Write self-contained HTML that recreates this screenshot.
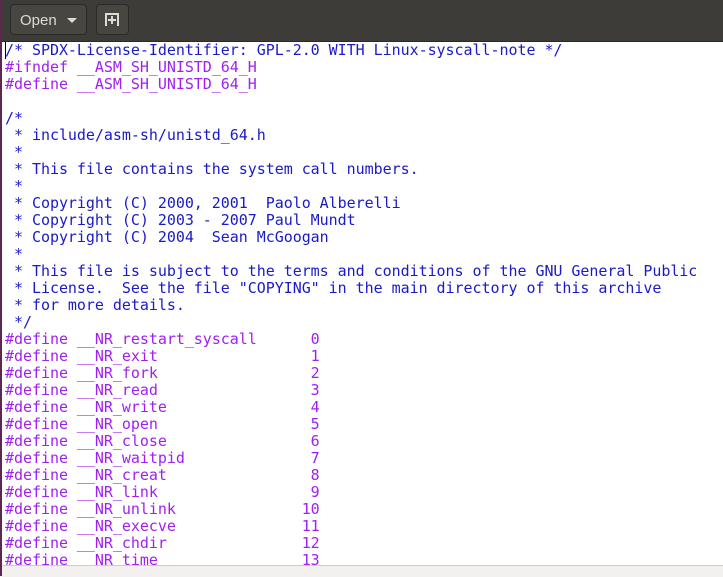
<!DOCTYPE html>
<html><head><style>
body{margin:0;width:723px;height:576px;overflow:hidden;background:#fff;position:relative;font-family:"DejaVu Sans Mono",monospace}
#hdr{position:absolute;left:0;top:0;width:723px;height:41px;background:#3d3c38;border-bottom:1px solid #2a2a28}
.btn{position:absolute;top:4px;height:31px;border:1px solid #2b2a27;border-radius:4px;background:#474641;color:#dfdbd2;font:15px "Liberation Sans",sans-serif;box-sizing:border-box}
#strip{position:absolute;left:0;top:0;width:2px;height:576px;background:#5e2750}
pre{position:absolute;left:5px;top:42px;margin:0;font:15px/17px "DejaVu Sans Mono",monospace;letter-spacing:-0.04px;color:#a020f0;white-space:pre}
.c{color:#1a1ac8}
#cur{position:absolute;left:5px;top:42px;width:1px;height:17px;background:#000}
#bot{position:absolute;left:0;top:565px;width:723px;height:11px;background:#f2f1f0;border-top:1px solid #cfcdca}
</style></head><body>
<div id="hdr">
<div class="btn" style="left:10px;width:77px"><span style="position:absolute;left:9px;top:7px">Open</span><span style="position:absolute;left:56px;top:13px;width:0;height:0;border-left:5px solid transparent;border-right:5px solid transparent;border-top:5px solid #dfdbd2"></span></div>
<div class="btn" style="left:96px;width:33px"><svg width="33" height="31" style="position:absolute;left:-1px;top:-1px"><path d="M10 22V10h12v12" fill="none" stroke="#dfdbd2" stroke-width="2"/><path d="M16 12v8M12 16h8" stroke="#dfdbd2" stroke-width="2"/></svg></div>
</div>
<pre><span class="c">/* SPDX-License-Identifier: GPL-2.0 WITH Linux-syscall-note */</span>
#ifndef __ASM_SH_UNISTD_64_H
#define __ASM_SH_UNISTD_64_H

<span class="c">/*
 * include/asm-sh/unistd_64.h
 *
 * This file contains the system call numbers.
 *
 * Copyright (C) 2000, 2001  Paolo Alberelli
 * Copyright (C) 2003 - 2007 Paul Mundt
 * Copyright (C) 2004  Sean McGoogan
 *
 * This file is subject to the terms and conditions of the GNU General Public
 * License.  See the file "COPYING" in the main directory of this archive
 * for more details.
 */</span>
#define __NR_restart_syscall      0
#define __NR_exit                 1
#define __NR_fork                 2
#define __NR_read                 3
#define __NR_write                4
#define __NR_open                 5
#define __NR_close                6
#define __NR_waitpid              7
#define __NR_creat                8
#define __NR_link                 9
#define __NR_unlink              10
#define __NR_execve              11
#define __NR_chdir               12
#define __NR_time                13</pre>
<div id="cur"></div>
<div id="bot"></div>
<div id="strip"></div>
</body></html>
